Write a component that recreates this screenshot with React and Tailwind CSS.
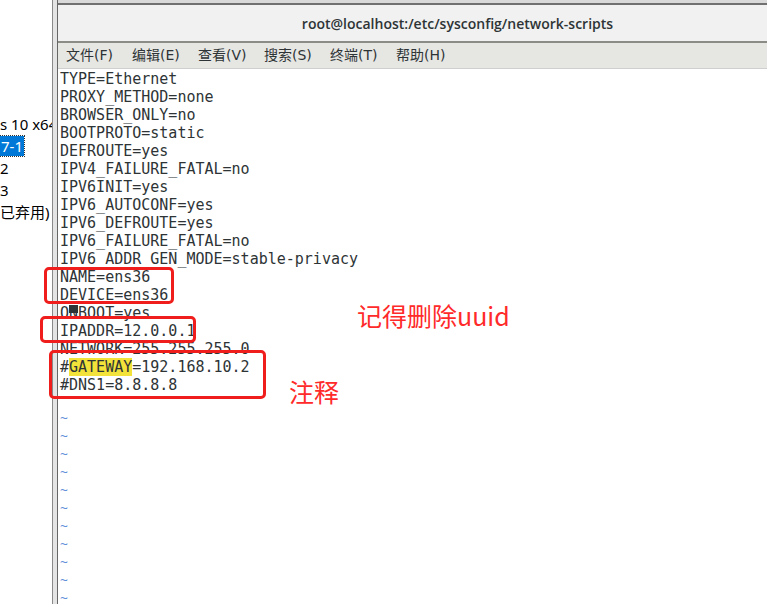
const lines = [
  "TYPE=Ethernet",
  "PROXY_METHOD=none",
  "BROWSER_ONLY=no",
  "BOOTPROTO=static",
  "DEFROUTE=yes",
  "IPV4_FAILURE_FATAL=no",
  "IPV6INIT=yes",
  "IPV6_AUTOCONF=yes",
  "IPV6_DEFROUTE=yes",
  "IPV6_FAILURE_FATAL=no",
  "IPV6_ADDR_GEN_MODE=stable-privacy",
  "NAME=ens36",
  "DEVICE=ens36",
  "ONBOOT=yes",
  "IPADDR=12.0.0.1",
  "NETWORK=255.255.255.0",
];

const menus = ["文件(F)", "编辑(E)", "查看(V)", "搜索(S)", "终端(T)", "帮助(H)"];

export default function App() {
  return (
    <div className="relative w-[767px] h-[604px] overflow-hidden flex bg-white">
      {/* left tree panel, mostly off screen */}
      <div className="w-[53px] shrink-0 border-r border-[#8a8a8a] bg-white pt-[113px] overflow-hidden text-[15px] text-black font-['Noto_Sans','Noto_Sans_CJK_SC',sans-serif]">
        <div className="h-[22px] leading-[22px] whitespace-nowrap">s 10 x64</div>
        <div className="h-[22px] flex items-center">
          <span className="bg-[#0078d7] text-white px-[1px] leading-[20px] outline-1 outline-dotted outline-[#333]">7-1</span>
        </div>
        <div className="h-[22px] leading-[22px]">2</div>
        <div className="h-[22px] leading-[22px]">3</div>
        <div className="h-[22px] leading-[22px] whitespace-nowrap">已弃用)</div>
      </div>
      <div className="w-[5px] shrink-0 bg-[#e4e4e4] border-r border-[#666]" />

      {/* terminal window */}
      <div className="flex-1 flex flex-col overflow-hidden">
        <div className="h-[3px] shrink-0 bg-[#d9d9d9]" />
        <div className="h-[2px] shrink-0 bg-[#707070]" />
        <div className="h-[36px] shrink-0 bg-[#f1f1f1] flex items-center justify-center pl-[90px] text-[14px] font-semibold text-[#2e3436] font-['Open_Sans',sans-serif]">
          root@localhost:/etc/sysconfig/network-scripts
        </div>
        <div className="h-[2px] shrink-0 bg-[#8c8c87]" />
        <div className="h-[26px] shrink-0 bg-[#e6e6e3] border-b border-[#cfcfcf] flex items-center pl-[8px] text-[14px] text-[#2e3436] font-['DejaVu_Sans','Noto_Sans_CJK_SC',sans-serif]">
          {menus.map((m) => (
            <span key={m} className="w-[66px] shrink-0">{m}</span>
          ))}
        </div>
        <div className="flex-1 bg-white pt-[1px] pl-[2px] text-[15px] leading-[18px] text-[#2e3436] font-['DejaVu_Sans_Mono',monospace] whitespace-pre">
          {lines.map((l) => (
            <div key={l} className="relative">
              {l === "ONBOOT=yes" && (
                <span className="absolute left-[9px] top-[1px] w-[9px] h-[8px] bg-[#2e3436]" />
              )}
              {l}
            </div>
          ))}
          <div>
            #<span className="bg-[#f2e239]">GATEWAY</span>=192.168.10.2
          </div>
          <div>#DNS1=8.8.8.8</div>
          <div>&nbsp;</div>
          {Array.from({ length: 11 }).map((_, i) => (
            <div key={i} className="relative -top-[3px] text-[#5f8fd9] text-[13px]">~</div>
          ))}
        </div>
      </div>

      {/* red annotations */}
      <div className="absolute left-[44px] top-[267px] w-[130px] h-[37px] border-[3px] border-[#f01d1d] rounded-[5px]" />
      <div className="absolute left-[40px] top-[316px] w-[156px] h-[27px] border-[3px] border-[#f01d1d] rounded-[5px]" />
      <div className="absolute left-[49px] top-[350px] w-[217px] h-[49px] border-[3px] border-[#f01d1d] rounded-[5px]" />
      <div className="absolute left-[357px] top-[299px] text-[25px] leading-[32px] text-[#ff2a2a] font-['Noto_Sans_CJK_SC',sans-serif]">
        记得删除uuid
      </div>
      <div className="absolute left-[289px] top-[375px] text-[25px] leading-[32px] text-[#ff2a2a] font-['Noto_Sans_CJK_SC',sans-serif]">
        注释
      </div>
    </div>
  );
}
